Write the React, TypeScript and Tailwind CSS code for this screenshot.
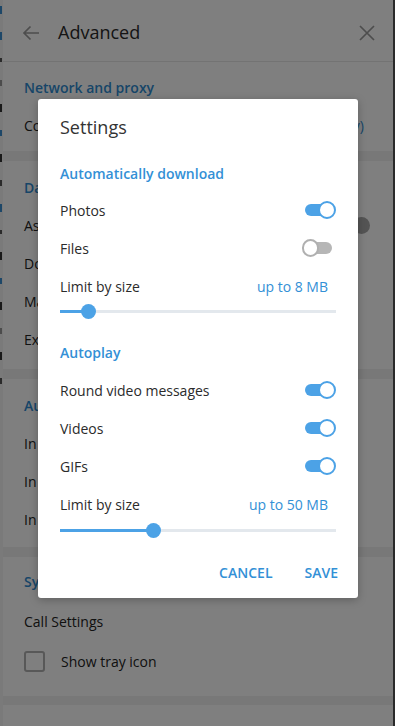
import React from "react";

function Toggle({ on }: { on: boolean }) {
  return (
    <div className="relative w-[31px] h-[18px]">
      <div
        className={
          on
            ? "absolute left-0 right-[1px] top-[3px] h-[12px] rounded-full bg-[#4ca2e6]"
            : "absolute left-[2px] right-[2px] top-[3px] h-[12px] rounded-full bg-[#b6b6b6]"
        }
      />
      <div
        className={
          on
            ? "absolute top-0 right-0 w-[18px] h-[18px] rounded-full border-2 border-[#4ca2e6] bg-white"
            : "absolute top-0 left-[-1px] w-[17px] h-[18px] rounded-full border-2 border-[#b0b0b0] bg-white"
        }
      />
    </div>
  );
}

function Slider({ pct }: { pct: number }) {
  return (
    <div className="relative h-[15px]">
      <div className="absolute left-0 right-0 top-[6px] h-[3px] bg-[#e3e8ed]" />
      <div className="absolute left-0 top-[6px] h-[3px] bg-[#4ca2e6]" style={{ width: `${pct}%` }} />
      <div
        className="absolute top-0 w-[15px] h-[15px] rounded-full bg-[#4ca2e6]"
        style={{ left: `calc(${pct}% - 7px)` }}
      />
    </div>
  );
}

function DRow({ label, children }: { label: string; children?: React.ReactNode }) {
  return (
    <div className="h-[38px] flex items-center justify-between text-[14px] text-[#2b2b2b]">
      <span>{label}</span>
      {children}
    </div>
  );
}

function DHeading({ label, h }: { label: string; h: string }) {
  return (
    <div className={`${h} flex items-center text-[14px] font-semibold text-[#3390d6]`}>{label}</div>
  );
}

function PRow({ label, right }: { label: string; right?: React.ReactNode }) {
  return (
    <div className="h-[38px] flex items-center justify-between pl-[21px] pr-[29px] text-[14px] text-[#222]">
      <span>{label}</span>
      {right}
    </div>
  );
}

function PHeading({ label }: { label: string }) {
  return (
    <div className="h-[38px] flex items-center pl-[21px] text-[14px] font-semibold text-[#2f8bd0]">{label}</div>
  );
}

export default function App() {
  return (
    <div
      className="relative w-[395px] h-[726px] overflow-hidden bg-white flex"
      style={{ fontFamily: "'Open Sans', 'Noto Sans', sans-serif" }}
    >
      {/* left sliver of window behind */}
      <div className="w-[3px] h-full bg-[#f4f4f4] flex flex-col gap-[18px] pt-[6px]">
        <div className="h-[8px] w-[2px] bg-[#3a8fd0]" />
        <div className="h-[8px] w-[2px] bg-[#3a8fd0]" />
        <div className="h-[4px] w-[2px] bg-[#555]" />
        <div className="h-[6px] w-[2px] bg-[#999]" />
        <div className="h-[8px] w-[2px] bg-[#333]" />
        <div className="h-[6px] w-[2px] bg-[#3a8fd0]" />
        <div className="h-[8px] w-[2px] bg-[#333]" />
        <div className="h-[6px] w-[2px] bg-[#555]" />
        <div className="h-[8px] w-[2px] bg-[#3a8fd0]" />
        <div className="h-[4px] w-[2px] bg-[#555]" />
        <div className="h-[8px] w-[2px] bg-[#333]" />
        <div className="h-[6px] w-[2px] bg-[#3a8fd0]" />
        <div className="h-[8px] w-[2px] bg-[#333]" />
        <div className="h-[6px] w-[2px] bg-[#999]" />
        <div className="h-[8px] w-[2px] bg-[#333]" />
        <div className="h-[6px] w-[2px] bg-[#555]" />
      </div>

      {/* settings panel */}
      <div className="w-[390px] h-full flex flex-col bg-white">
        <div className="h-[62px] shrink-0 flex items-center border-b border-[#e6e6e6] pt-[4px] pl-[19px] pr-[18px]">
          <svg width="18" height="18" viewBox="0 0 18 18" fill="none" stroke="#9a9a9a" strokeWidth="1.7">
            <path d="M17 9H2M8.5 2.5L2 9l6.5 6.5" />
          </svg>
          <span className="ml-[18px] text-[18px] text-[#2a2a2a]">Advanced</span>
          <div className="flex-1" />
          <svg width="16" height="16" viewBox="0 0 16 16" fill="none" stroke="#9a9a9a" strokeWidth="1.7">
            <path d="M1 1l14 14M15 1L1 15" />
          </svg>
        </div>

        <div className="pt-[6px] pb-[7px]">
          <PHeading label="Network and proxy" />
          <PRow
            label="Connection type"
            right={<span className="text-[#2f8bd0]">Default (use proxy)</span>}
          />
        </div>
        <div className="h-[10px] bg-[#f0f0f0] shrink-0" />

        <div className="pt-[7px] pb-[11px]">
          <PHeading label="Data and storage" />
          <PRow
            label="Ask download path"
            right={<div className="w-[17px] h-[17px] rounded-full bg-[#a8a8a8] mr-[-6px]" />}
          />
          <PRow label="Download path" />
          <PRow label="Manage local storage" />
          <PRow label="Export Telegram data" />
        </div>
        <div className="h-[10px] bg-[#f0f0f0] shrink-0" />

        <div className="pt-[7px] pb-[9px]">
          <PHeading label="Automatic media download" />
          <PRow label="In private chats" />
          <PRow label="In groups" />
          <PRow label="In channels" />
        </div>
        <div className="h-[10px] bg-[#f0f0f0] shrink-0" />

        <div className="pt-[5px] pb-[16px]">
          <PHeading label="System integration" />
          <div className="h-[42px] flex items-center pl-[21px] text-[14px] text-[#222]">Call Settings</div>
          <div className="h-[38px] flex items-center pl-[21px] text-[14px] text-[#222]">
            <div className="w-[21px] h-[21px] rounded-[3px] border-2 border-[#b0b0b0]" />
            <span className="ml-[16px]">Show tray icon</span>
          </div>
        </div>
        <div className="h-[9px] bg-[#f0f0f0] shrink-0" />
        <div className="flex-1 bg-white" />
      </div>

      {/* right sliver */}
      <div className="w-[2px] h-full bg-[#555]" />

      {/* dim overlay */}
      <div className="absolute inset-0 bg-black/50" />

      {/* dialog */}
      <div className="absolute left-[38px] top-[99px] w-[320px] h-[499px] bg-white rounded-[3px] shadow-[0_2px_8px_rgba(0,0,0,0.25)] px-[22px] flex flex-col">
        <div className="h-[56px] flex items-center text-[18px] text-[#333]">Settings</div>
        <DHeading label="Automatically download" h="h-[36px]" />
        <DRow label="Photos">
          <Toggle on />
        </DRow>
        <DRow label="Files">
          <div className="mr-[2px]">
            <Toggle on={false} />
          </div>
        </DRow>
        <DRow label="Limit by size">
          <span className="text-[#3390d6] mr-[8px]">up to 8 MB</span>
        </DRow>
        <div className="h-[28px]">
          <div className="-mt-[1px]">
            <Slider pct={10.3} />
          </div>
        </div>
        <DHeading label="Autoplay" h="h-[38px]" />
        <DRow label="Round video messages">
          <Toggle on />
        </DRow>
        <DRow label="Videos">
          <Toggle on />
        </DRow>
        <DRow label="GIFs">
          <Toggle on />
        </DRow>
        <DRow label="Limit by size">
          <span className="text-[#3390d6] mr-[8px]">up to 50 MB</span>
        </DRow>
        <div className="h-[30px]">
          <Slider pct={33.6} />
        </div>
        <div className="h-[38px] flex items-center justify-end gap-[32px] text-[14px] font-semibold text-[#3390d6]">
          <span>CANCEL</span>
          <span className="mr-[-2px]">SAVE</span>
        </div>
      </div>
    </div>
  );
}
